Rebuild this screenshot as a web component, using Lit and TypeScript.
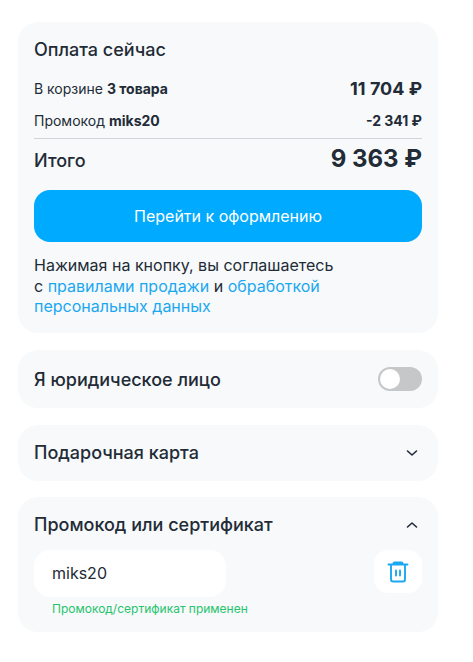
import { LitElement, html, css } from "lit";
import { customElement } from "lit/decorators.js";

const chevron = (up: boolean) => html`<svg class="chev" width="12" height="8" viewBox="0 0 12 8" fill="none">
  <path d=${up ? "M1.5 6L6 2l4.5 4" : "M1.5 2L6 6l4.5-4"} stroke="#222b36" stroke-width="1.6" stroke-linecap="round" stroke-linejoin="round"/>
</svg>`;

@customElement("app-root")
export class AppRoot extends LitElement {
  static styles = css`
    :host {
      display: block;
      box-sizing: border-box;
      width: 473px;
      height: 662px;
      padding: 22px 35px 0 18px;
      background: #fff;
      font-family: Inter, "Noto Sans", sans-serif;
      color: #222b36;
    }
    .card {
      background: #f7f9fb;
      border-radius: 20px;
      padding: 0 16px;
      margin-bottom: 17px;
    }
    .summary { height: 311px; box-sizing: border-box; padding-top: 17px; }
    .title { font-size: 18px; font-weight: 460; line-height: 22px; }
    .row { display: flex; justify-content: space-between; align-items: center; }
    .r1 { margin-top: 15px; height: 24px; font-size: 14px; }
    .r2 { margin-top: 8px; height: 24px; font-size: 14px; padding-bottom: 6px; border-bottom: 1px solid #d3d5d9; }
    .r3 { height: 40px; box-sizing: border-box; padding-top: 5px; font-size: 18px; font-weight: 460; align-items: baseline; }
    b { font-weight: 700; }
    .amt1 { font-size: 18px; font-weight: 700; }
    .amt2 { font-size: 14px; font-weight: 700; }
    .amt3 { font-size: 24px; font-weight: 700; }
    .btn {
      display: flex; align-items: center; justify-content: center;
      height: 52px; margin-top: 11px;
      border-radius: 16px; background: #00aaff; color: #fff;
      font-size: 16px; font-weight: 400;
    }
    .note { margin-top: 13px; font-size: 16px; line-height: 20.5px; color: #222b36; }
    .note a { color: #1ba8f0; text-decoration: none; }
    .bar { display: flex; justify-content: space-between; align-items: center; }
    .legal { height: 58px; }
    .gift { height: 56px; margin-bottom: 16px; padding-bottom: 1px; box-sizing: border-box; }
    .label { font-size: 18px; font-weight: 460; }
    .toggle {
      width: 44px; height: 24px; border-radius: 12px; background: #c6c7c9;
      box-sizing: border-box; padding: 2px; margin-top: -1px;
    }
    .knob { width: 20px; height: 20px; border-radius: 50%; background: #fff; }
    .chev { margin-right: 4px; }
    .promo { height: 135px; box-sizing: border-box; }
    .promo .bar { height: 55px; }
    .inputs { display: flex; justify-content: space-between; align-items: flex-start; margin-top: -2px; }
    .input {
      width: 192px; height: 47px; box-sizing: border-box; border-radius: 16px;
      background: #fff; padding: 0 0 1px 18px; display: flex; align-items: center;
      font-size: 16px;
    }
    .trash {
      width: 48px; height: 43px; border-radius: 14px; background: #fff;
      display: flex; align-items: center; justify-content: center;
    }
    .ok { margin: 4px 0 0 18px; font-size: 12px; line-height: 16px; color: #26c46c; }
  `;

  render() {
    return html`
      <section class="card summary">
        <div class="title">Оплата сейчас</div>
        <div class="row r1"><span>В корзине <b>3 товара</b></span><span class="amt1">11 704 ₽</span></div>
        <div class="row r2"><span>Промокод <b>miks20</b></span><span class="amt2">-2 341 ₽</span></div>
        <div class="row r3"><span>Итого</span><span class="amt3">9 363 ₽</span></div>
        <div class="btn">Перейти к оформлению</div>
        <div class="note">Нажимая на кнопку, вы соглашаетесь<br />с <a>правилами продажи</a> и <a>обработкой<br />персональных данных</a></div>
      </section>
      <section class="card bar legal">
        <span class="label">Я юридическое лицо</span>
        <div class="toggle"><div class="knob"></div></div>
      </section>
      <section class="card bar gift">
        <span class="label">Подарочная карта</span>
        ${chevron(false)}
      </section>
      <section class="card promo">
        <div class="bar"><span class="label">Промокод или сертификат</span>${chevron(true)}</div>
        <div class="inputs">
          <div class="input">miks20</div>
          <div class="trash">
            <svg width="22" height="22" viewBox="0 0 22 22" fill="none" stroke="#1ba8f0" stroke-width="1.9" stroke-linecap="round" stroke-linejoin="round">
              <path d="M1.500 3.500h19M6.500 3.500v-1a1 1 0 0 1 1-1h7a1 1 0 0 1 1 1v1M4 3.500V18.500a2 2 0 0 0 2 2h10a2 2 0 0 0 2-2V3.500M9 9.500v5M13 9.500v5"/>
            </svg>
          </div>
        </div>
        <div class="ok">Промокод/сертификат применен</div>
      </section>
    `;
  }
}
